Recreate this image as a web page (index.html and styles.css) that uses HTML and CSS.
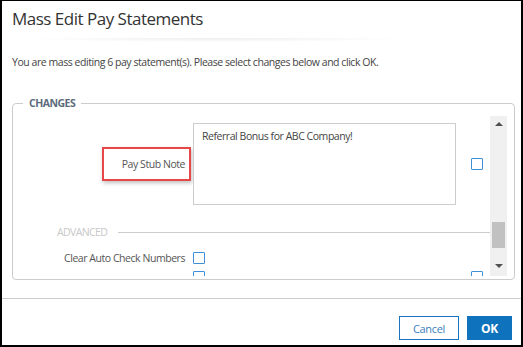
FILE: index.html
```html
<!DOCTYPE html>
<html lang="en">
<head>
    <meta charset="UTF-8">
    <meta name="viewport" content="width=device-width, initial-scale=1.0">
    <title>Mass Edit Pay Statements</title>
    <link rel="stylesheet" href="styles.css">
</head>
<body>
    <div class="dialog">
        <div class="dialog-header">
            <h2>Mass Edit Pay Statements</h2>
        </div>
        <div class="header-shadow"></div>

        <div class="dialog-body">
            <p class="intro">You are mass editing 6 pay statement(s). Please select changes below and click OK.</p>

            <fieldset class="changes">
                <legend>CHANGES</legend>
                <div class="scroll-area">
                    <div class="scroll-content">
                        <div class="form-row note-row">
                            <div class="field-label"><span class="highlight">Pay Stub Note</span></div>
                            <textarea class="note-input">Referral Bonus for ABC Company!</textarea>
                            <span class="checkbox apply-box"></span>
                        </div>

                        <div class="section-title">
                            <span>ADVANCED</span>
                            <span class="section-line"></span>
                        </div>

                        <div class="form-row">
                            <div class="field-label">Clear Auto Check Numbers</div>
                            <span class="checkbox"></span>
                        </div>

                        <div class="form-row partial-row">
                            <div class="field-label"></div>
                            <span class="checkbox"></span>
                            <span class="spacer"></span>
                            <span class="checkbox"></span>
                        </div>
                    </div>

                    <!-- drawn scrollbar -->
                    <div class="scrollbar">
                        <span class="arrow arrow-up"></span>
                        <span class="track-gap"></span>
                        <span class="thumb"></span>
                        <span class="arrow arrow-down"></span>
                    </div>
                </div>
            </fieldset>
        </div>

        <div class="dialog-footer">
            <button class="btn btn-cancel">Cancel</button>
            <button class="btn btn-ok">OK</button>
        </div>
    </div>
</body>
</html>
```

FILE: styles.css
```css
* {
    box-sizing: border-box;
}
body {
    margin: 0;
    font-family: "Open Sans", Arial, sans-serif;
    font-size: 10.5px;
    letter-spacing: -0.45px;
    color: #444;
    background: #fff;
}
.dialog {
    width: 523px;
    height: 347px;
    border: 2px solid #000;
    border-top-width: 1px;
    display: flex;
    flex-direction: column;
    overflow: hidden;
}
.dialog-header {
    padding: 6px 10px 0;
    height: 37px;
    flex-shrink: 0;
}
.dialog-header h2 {
    margin: 0;
    font-size: 17px;
    font-weight: 400;
    line-height: 24px;
    letter-spacing: -0.5px;
    color: #333;
}
.header-shadow {
    height: 6px;
    margin: 0 30px;
    flex-shrink: 0;
    background: radial-gradient(ellipse 60% 100% at 40% 0%, rgba(0,0,0,0.07), rgba(0,0,0,0) 70%);
}
.dialog-body {
    padding: 0 6px 0 10px;
    flex: 1;
    overflow: hidden;
}
.intro {
    margin: 10px 0 0 0;
    line-height: 16px;
    color: #444;
}
.changes {
    margin: 27px 0 0 0;
    padding: 7px 7px 3px 0;
    border: 1px solid #ccc;
    border-radius: 4px;
    height: 183px;
}
.changes legend {
    margin-left: 10px;
    padding: 0 6px;
    font-weight: 700;
    letter-spacing: -0.5px;
    color: #5c6b7c;
    line-height: 12px;
}
.scroll-area {
    display: flex;
    height: 160px;
    overflow: hidden;
}
.scroll-content {
    flex: 1;
    padding-top: 7px;
}
.form-row {
    display: flex;
    align-items: center;
}
.field-label {
    width: 180px;
    padding-right: 8px;
    text-align: right;
    color: #555;
    flex-shrink: 0;
}
.highlight {
    display: inline-block;
    padding: 7px 4px 7px 18px;
    margin-right: -6px;
    border: 2px solid #e8474a;
    box-shadow: 1px 2px 4px rgba(0,0,0,0.25);
    line-height: 16px;
}
.note-input {
    width: 263px;
    height: 82px;
    padding: 5px 8px;
    border: 1px solid #ccc;
    font-family: inherit;
    font-size: inherit;
    letter-spacing: inherit;
    color: #444;
    resize: none;
}
.checkbox {
    display: inline-block;
    width: 12px;
    height: 12px;
    border: 1px solid #3f8fd6;
    border-radius: 1px;
    background: #fff;
    flex-shrink: 0;
}
.apply-box {
    margin-left: 15px;
}
.section-title {
    display: flex;
    align-items: center;
    margin: 20px 0 0 44px;
    color: #c8c8c8;
    letter-spacing: -0.6px;
}
.section-line {
    flex: 1;
    height: 1px;
    background: #ccc;
    margin-left: 11px;
}
.form-row + .form-row {
    margin-top: 6px;
}
.section-title + .form-row {
    margin-top: 12px;
}
.partial-row .spacer {
    width: 266px;
}
.scrollbar {
    width: 17px;
    background: #f0f0f0;
    display: flex;
    flex-direction: column;
    align-items: center;
}
.arrow {
    width: 0;
    height: 0;
    border-left: 4px solid transparent;
    border-right: 4px solid transparent;
}
.arrow-up {
    margin-top: 6px;
    border-bottom: 4px solid #505050;
}
.arrow-down {
    margin-bottom: 8px;
    border-top: 4px solid #505050;
}
.track-gap {
    flex: 1;
}
.thumb {
    width: 13px;
    height: 26px;
    background: #c1c1c1;
    margin-bottom: 16px;
}
.dialog-footer {
    border-top: 1px solid #ccc;
    height: 47px;
    flex-shrink: 0;
    display: flex;
    justify-content: flex-end;
    align-items: flex-start;
    gap: 8px;
    padding: 17px 9px 0 0;
}
.btn {
    height: 24px;
    font-family: inherit;
    font-size: 11px;
    letter-spacing: -0.3px;
    border-radius: 0;
    cursor: pointer;
}
.btn-cancel {
    width: 60px;
    background: #fff;
    color: #3b80c0;
    border: 1px solid #1e73be;
}
.btn-ok {
    width: 45px;
    background: #0f72bd;
    color: #fff;
    font-weight: 700;
    font-size: 12px;
    border: 1px solid #0f72bd;
}
```
